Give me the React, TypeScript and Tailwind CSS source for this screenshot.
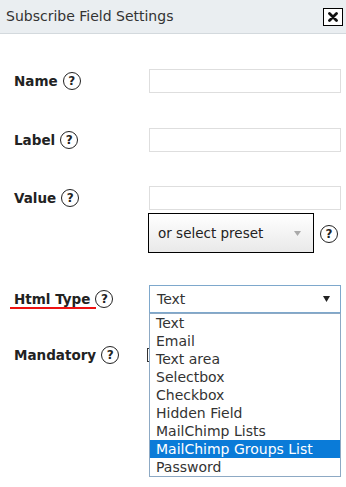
import React from 'react'

const font = { fontFamily: '"DejaVu Sans", Verdana, sans-serif' }

function Help() {
  return (
    <span className="inline-flex items-center justify-center w-[18px] h-[18px] rounded-full border-[1.5px] border-[#222] text-[12px] font-bold text-[#222] leading-none">
      ?
    </span>
  )
}

const options = [
  'Text',
  'Email',
  'Text area',
  'Selectbox',
  'Checkbox',
  'Hidden Field',
  'MailChimp Lists',
  'MailChimp Groups List',
  'Password',
]

export default function App() {
  return (
    <div className="w-[346px] h-[487px] bg-white text-[13.5px] text-[#222] overflow-hidden" style={font}>
      {/* Header */}
      <div className="h-[34px] bg-[#eaeef1] border-b border-[#d3d9dd] flex items-center justify-between pl-[6px] pr-[3px]">
        <span className="text-[14px] text-[#333]">Subscribe Field Settings</span>
        <button className="w-[20px] h-[18px] border border-black bg-white flex items-center justify-center">
          <svg width="10" height="10" viewBox="0 0 10 10">
            <path d="M1.5 1.5 L8.5 8.5 M8.5 1.5 L1.5 8.5" stroke="#111" strokeWidth="2.8" strokeLinecap="round" />
          </svg>
        </button>
      </div>

      <div className="pl-[14px]">
        {/* Name */}
        <div className="flex items-center mt-[35px]">
          <div className="w-[135px] flex items-center gap-[5px] font-bold">
            Name <Help />
          </div>
          <div className="w-[192px] h-[24px] border border-[#dedede]" />
        </div>

        {/* Label */}
        <div className="flex items-center mt-[35px]">
          <div className="w-[135px] flex items-center gap-[5px] font-bold">
            Label <Help />
          </div>
          <div className="w-[192px] h-[24px] border border-[#dedede]" />
        </div>

        {/* Value */}
        <div className="flex items-center mt-[34px]">
          <div className="w-[135px] flex items-center gap-[5px] font-bold">
            Value <Help />
          </div>
          <div className="w-[192px] h-[24px] border border-[#dedede]" />
        </div>
        <div className="flex items-center mt-[3px] ml-[134px]">
          <div className="w-[166px] h-[40px] border border-black bg-gradient-to-b from-white to-[#e9e9e9] flex items-center justify-between pl-[9px] pr-[12px]">
            <span>or select preset</span>
            <svg width="7" height="5" viewBox="0 0 7 5">
              <path d="M0 0 H7 L3.5 5 Z" fill="#aaa" />
            </svg>
          </div>
          <span className="ml-[6px]">
            <Help />
          </span>
        </div>

        {/* Html Type */}
        <div className="relative flex items-center mt-[32px]">
          <div className="relative w-[135px] flex items-center gap-[5px] font-bold">
            Html Type <Help />
            <span className="absolute left-[-4px] top-[18px] w-[86px] h-[2px] bg-[#ee1111]" />
          </div>
          <div className="w-[192px] h-[28px] border border-[#7ea8cc] flex items-center justify-between pl-[7px] pr-[10px] text-[#333]">
            <span className="text-[14px]">Text</span>
            <svg width="7" height="6" viewBox="0 0 7 6">
              <path d="M0 0 H7 L3.5 6 Z" fill="#222" />
            </svg>
          </div>
          <ul className="absolute left-[135px] top-[28px] w-[192px] border border-[#8da9c4] bg-white z-10 text-[#333] text-[14px]">
            {options.map((o) => (
              <li
                key={o}
                className={`h-[18px] leading-[18px] pl-[6px] ${o === 'MailChimp Groups List' ? 'bg-[#0a7bd8] text-white' : ''}`}
              >
                {o}
              </li>
            ))}
          </ul>
        </div>

        {/* Mandatory */}
        <div className="flex items-center mt-[32px]">
          <div className="w-[133px] flex items-center gap-[5px] font-bold">
            Mandatory <Help />
          </div>
          <div className="w-[14px] h-[14px] border border-[#333]" />
        </div>
      </div>
    </div>
  )
}
